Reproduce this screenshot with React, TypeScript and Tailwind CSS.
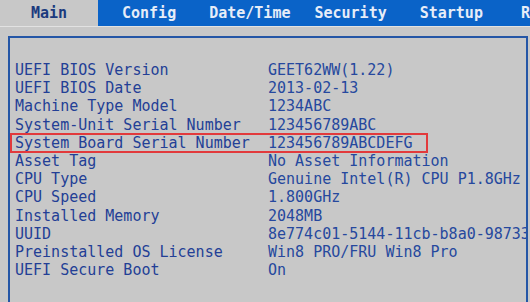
import React from "react";

const rows: [string, string][] = [
  ["UEFI BIOS Version", "GEET62WW(1.22)"],
  ["UEFI BIOS Date", "2013-02-13"],
  ["Machine Type Model", "1234ABC"],
  ["System-Unit Serial Number", "123456789ABC"],
  ["System Board Serial Number", "123456789ABCDEFG"],
  ["Asset Tag", "No Asset Information"],
  ["CPU Type", "Genuine Intel(R) CPU P1.8GHz"],
  ["CPU Speed", "1.800GHz"],
  ["Installed Memory", "2048MB"],
  ["UUID", "8e774c01-5144-11cb-b8a0-98733a1b2c3d"],
  ["Preinstalled OS License", "Win8 PRO/FRU Win8 Pro"],
  ["UEFI Secure Boot", "On"],
];

export default function App() {
  const mono = { fontFamily: '"DejaVu Sans Mono", "Liberation Mono", monospace' };
  return (
    <div
      className="w-[530px] h-[302px] overflow-hidden bg-[#c8c8c8] flex flex-col"
      style={mono}
    >
      <div className="h-[26px] shrink-0 flex bg-[#0a63c8] text-[15px] font-bold text-[#e6edf8] items-center overflow-hidden whitespace-nowrap">
        <div className="w-[98px] shrink-0 h-full bg-[#c8c8c8] flex items-center justify-center text-[#1b3a7e]">
          Main
        </div>
        <div className="ml-[24px] shrink-0">Config</div>
        <div className="ml-[33px] shrink-0">Date/Time</div>
        <div className="ml-[24px] shrink-0">Security</div>
        <div className="ml-[33px] shrink-0">Startup</div>
        <div className="ml-[38px] shrink-0">R</div>
      </div>
      <div className="h-px shrink-0 bg-[#e2e2e2]" />
      <div className="ml-[8px] mr-[2px] mt-[9px] h-[400px] shrink-0 border-2 border-[#2456a6] overflow-hidden pt-[23px] pl-[5px]">
        <div className="text-[15px] leading-[18.2px] text-[#233f96]">
          {rows.map(([k, v], i) => (
            <div key={k} className="relative flex whitespace-nowrap">
              <div className="w-[253px] shrink-0">{k}</div>
              <div className="text-[#26489e]">{v}</div>
              {i === 4 && (
                <div className="absolute left-[-5px] top-[-1px] w-[418px] h-[20px] border-2 border-[#e23a3c]" />
              )}
            </div>
          ))}
        </div>
      </div>
    </div>
  );
}
